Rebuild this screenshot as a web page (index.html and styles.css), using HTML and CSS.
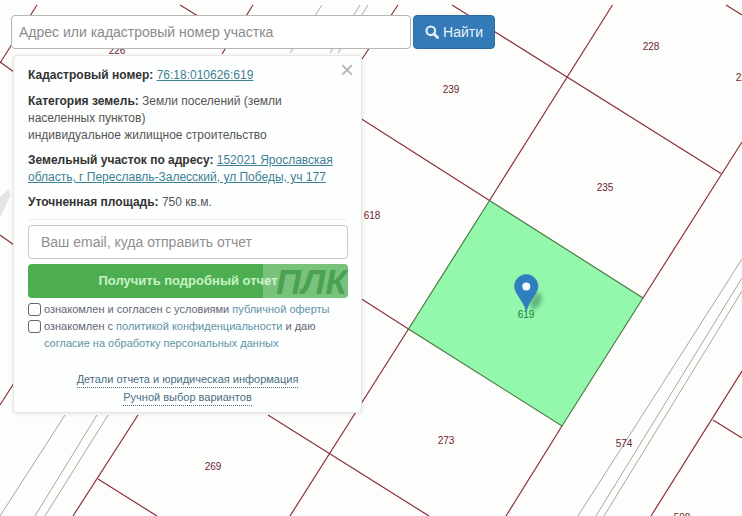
FILE: index.html
```html
<!DOCTYPE html>
<html lang="ru">
<head>
<meta charset="utf-8">
<title>Кадастровый номер</title>
<link rel="stylesheet" href="styles.css">
</head>
<body>
<div class="page">
  <svg class="map" width="742" height="516" viewBox="0 0 742 516">
    <rect width="742" height="516" fill="#fdfefb"/>
    <polygon class="smudge" points="0,197 9,189 10,196 0,218"/>
    <g class="gray">
      <line x1="322" y1="5" x2="290" y2="53"/>
      <line x1="360" y1="5" x2="330" y2="53"/>
      <line x1="368" y1="5" x2="338" y2="53"/>
      <line x1="65" y1="415" x2="0" y2="516"/>
      <line x1="97" y1="415" x2="35" y2="516"/>
      <line x1="108" y1="415" x2="45" y2="516"/>
      <line x1="742" y1="259" x2="578" y2="516"/>
      <line x1="742" y1="278" x2="596" y2="516"/>
      <line x1="742" y1="291" x2="604" y2="516"/>
    </g>
    <polygon class="parcel" points="489.5,200.5 643,298 562,426 408.5,329"/>
    <g class="red">
      <line x1="37" y1="5" x2="0" y2="63"/>
      <line x1="0" y1="62" x2="14" y2="72"/>
      <line x1="0" y1="235" x2="14" y2="245"/>
      <line x1="180" y1="5" x2="198" y2="16"/>
      <line x1="253" y1="5" x2="222" y2="54"/>
      <line x1="398" y1="5" x2="360" y2="62"/>
      <line x1="452" y1="5" x2="721" y2="173.5"/>
      <line x1="726" y1="5" x2="742" y2="15"/>
      <line x1="612.5" y1="5" x2="489.5" y2="200.5"/>
      <line x1="408.5" y1="329" x2="290" y2="516"/>
      <line x1="360" y1="118" x2="489.5" y2="200.5"/>
      <line x1="360" y1="298" x2="408.5" y2="329"/>
      <line x1="742" y1="142" x2="643" y2="298"/>
      <line x1="562" y1="426" x2="506" y2="516"/>
      <line x1="268" y1="415" x2="429" y2="516"/>
      <line x1="138" y1="415" x2="73" y2="516"/>
      <line x1="98" y1="479" x2="157" y2="516"/>
      <line x1="0" y1="405" x2="14" y2="383"/>
      <line x1="742" y1="371" x2="651" y2="516"/>
      <line x1="713" y1="420" x2="742" y2="438"/>
    </g>
    <g class="labels">
      <text x="117" y="54">226</text>
      <text x="651" y="50">228</text>
      <text x="451" y="93">239</text>
      <text x="605" y="191">235</text>
      <text x="372" y="219">618</text>
      <text x="446" y="444">273</text>
      <text x="624" y="447">574</text>
      <text x="213" y="470">269</text>
      <text x="682" y="521">598</text>
      <text x="744" y="81">228</text>
      <text class="here" x="526" y="318">619</text>
    </g>
    <ellipse class="pin-shadow" cx="536" cy="301" rx="5" ry="9" transform="rotate(25 536 301)"/>
    <path class="pin" d="M526.3 311 C523.5 301 514.5 293 514.5 286.5 C514.5 279.5 520 274.5 526.3 274.5 C532.6 274.5 538 279.5 538 286.5 C538 293 529 301 526.3 311 Z"/>
    <circle class="pin-dot" cx="526.3" cy="286.5" r="4"/>
  </svg>

  <div class="ui">
    <form class="search">
      <input class="search-input" type="text" placeholder="Адрес или кадастровый номер участка">
      <button class="search-btn" type="button">
        <svg class="search-icon" width="14" height="14" viewBox="0 0 14 14"><circle cx="5.8" cy="5.8" r="4.3"/><line x1="9" y1="9" x2="12.6" y2="12.6"/></svg>
        <span>Найти</span>
      </button>
    </form>

    <section class="panel">
      <span class="close">×</span>
      <p class="row first"><b>Кадастровый номер:</b> <a href="#">76:18:010626:619</a></p>
      <p class="row"><b>Категория земель:</b> Земли поселений (земли населенных пунктов)<br>индивидуальное жилищное строительство</p>
      <p class="row"><b>Земельный участок по адресу:</b> <a href="#">152021 Ярославская область, г Переславль-Залесский, ул Победы, уч 177</a></p>
      <p class="row"><b>Уточненная площадь:</b> 750 кв.м.</p>
      <hr class="rule">
      <input class="email" type="text" placeholder="Ваш email, куда отправить отчет">
      <button class="report" type="button">Получить подробный отчет<span class="mark">ПЛК</span></button>
      <div class="agree">
        <span class="box"></span>
        <span>ознакомлен и согласен с условиями <a href="#">публичной оферты</a></span>
      </div>
      <div class="agree">
        <span class="box"></span>
        <span>ознакомлен с <a href="#">политикой конфиденциальности</a> и даю <a href="#">согласие на обработку персональных данных</a></span>
      </div>
      <div class="more">
        <a href="#">Детали отчета и юридическая информация</a>
        <a href="#">Ручной выбор вариантов</a>
      </div>
    </section>
  </div>
</div>
</body>
</html>
```

FILE: styles.css
```css
* { box-sizing: border-box; }

html, body { margin: 0; padding: 0; }

body {
  font-family: "Liberation Sans", Arial, sans-serif;
  font-size: 12px;
  color: #3a3a3a;
}

.page {
  position: relative;
  width: 742px;
  height: 516px;
  overflow: hidden;
  background: #fdfefb;
}

.map { position: absolute; left: 0; top: 0; }

.map line { stroke-width: 1.2; }
.red line { stroke: #8a2f40; }
.gray line { stroke: #a9a5a2; stroke-width: 1; }
.parcel { fill: #93f7ac; stroke: #4f7a45; stroke-width: 1.2; }
.smudge { fill: #e4e4e2; }

.labels text {
  font-family: "Liberation Sans", Arial, sans-serif;
  font-size: 10px;
  fill: #6b2230;
  text-anchor: middle;
}
.labels .here { fill: #1f7a3c; }

.pin { fill: #2f7fc0; stroke: #2a6ea8; stroke-width: .5; }
.pin-dot { fill: #f2fbfb; }
.pin-shadow { fill: #3f8a5c; opacity: .6; filter: blur(2px); }

.ui {
  position: relative;
  padding: 15px 0 0 11px;
}

.search {
  display: flex;
  gap: 2px;
  height: 34px;
}

.search-input {
  width: 400px;
  height: 34px;
  padding: 0 7px;
  font: 14px "Liberation Sans", Arial, sans-serif;
  color: #555;
  background: #fff;
  border: 1px solid #b5b5b5;
  border-radius: 4px;
}
.search-input::placeholder { color: #8b8b8b; opacity: 1; }

.search-btn {
  display: flex;
  align-items: center;
  justify-content: center;
  gap: 4px;
  width: 82px;
  height: 34px;
  padding: 0;
  font: 14px "Liberation Sans", Arial, sans-serif;
  color: #eaf3fa;
  background: #337ab7;
  border: 1px solid #2e6da4;
  border-radius: 4px;
}

.search-icon circle { fill: none; stroke: #e6f0f8; stroke-width: 2.2; }
.search-icon line { stroke: #e6f0f8; stroke-width: 2.8; stroke-linecap: round; }

.panel {
  position: relative;
  width: 349px;
  height: 358px;
  margin: 6px 0 0 2px;
  padding: 11px 14px 0 14px;
  background: #fdfefe;
  border: 1px solid #e6e6e4;
  border-radius: 4px;
  box-shadow: 0 1px 4px rgba(0, 0, 0, .1);
}

.close {
  position: absolute;
  right: 7px;
  top: 1px;
  font-size: 24px;
  line-height: 26px;
  color: #b4b8b8;
}

.row {
  margin: 0 0 8px;
  line-height: 17px;
  color: #555;
}
.row.first { margin-bottom: 9px; }
.row b { color: #333; }
.row a { color: #3f7f93; text-decoration: underline; }

.rule {
  height: 1px;
  margin: 8px 0 5px;
  background: #eeeeee;
  border: 0;
}

.email {
  display: block;
  width: 320px;
  height: 34px;
  padding: 0 12px;
  font: 14px "Liberation Sans", Arial, sans-serif;
  background: #fff;
  border: 1px solid #c9c9c9;
  border-radius: 4px;
}
.email::placeholder { color: #8f8f8f; opacity: 1; }

.report {
  position: relative;
  display: block;
  width: 320px;
  height: 34px;
  margin: 5px 0 3px;
  padding: 0;
  font: bold 13px/34px "Liberation Sans", Arial, sans-serif;
  color: #c7f2c6;
  background: #4cae50;
  border: 0;
  border-radius: 4px;
  overflow: hidden;
}

.mark {
  position: absolute;
  right: 0;
  top: 0;
  width: 85px;
  height: 34px;
  padding-left: 13px;
  font: italic bold 35px/35px "Liberation Sans", Arial, sans-serif;
  color: rgba(60, 150, 70, .75);
  background: rgba(255, 255, 255, .25);
  text-align: left;
  white-space: nowrap;
  overflow: hidden;
}

.agree {
  display: flex;
  gap: 3px;
  margin-bottom: 0;
  line-height: 17px;
  font-size: 11px;
  color: #667;
}
.agree a { color: #5f93a8; text-decoration: none; }

.box {
  flex: none;
  width: 13px;
  height: 13px;
  margin-top: 2px;
  background: #fff;
  border: 1px solid #666;
  border-radius: 3px;
}

.more {
  display: flex;
  flex-direction: column;
  align-items: center;
  gap: 2px;
  margin-top: 20px;
  font-size: 11px;
  line-height: 15px;
}
.more a {
  color: #4a6f80;
  text-decoration: none;
  border-bottom: 1px dotted #4a6f80;
}
```
